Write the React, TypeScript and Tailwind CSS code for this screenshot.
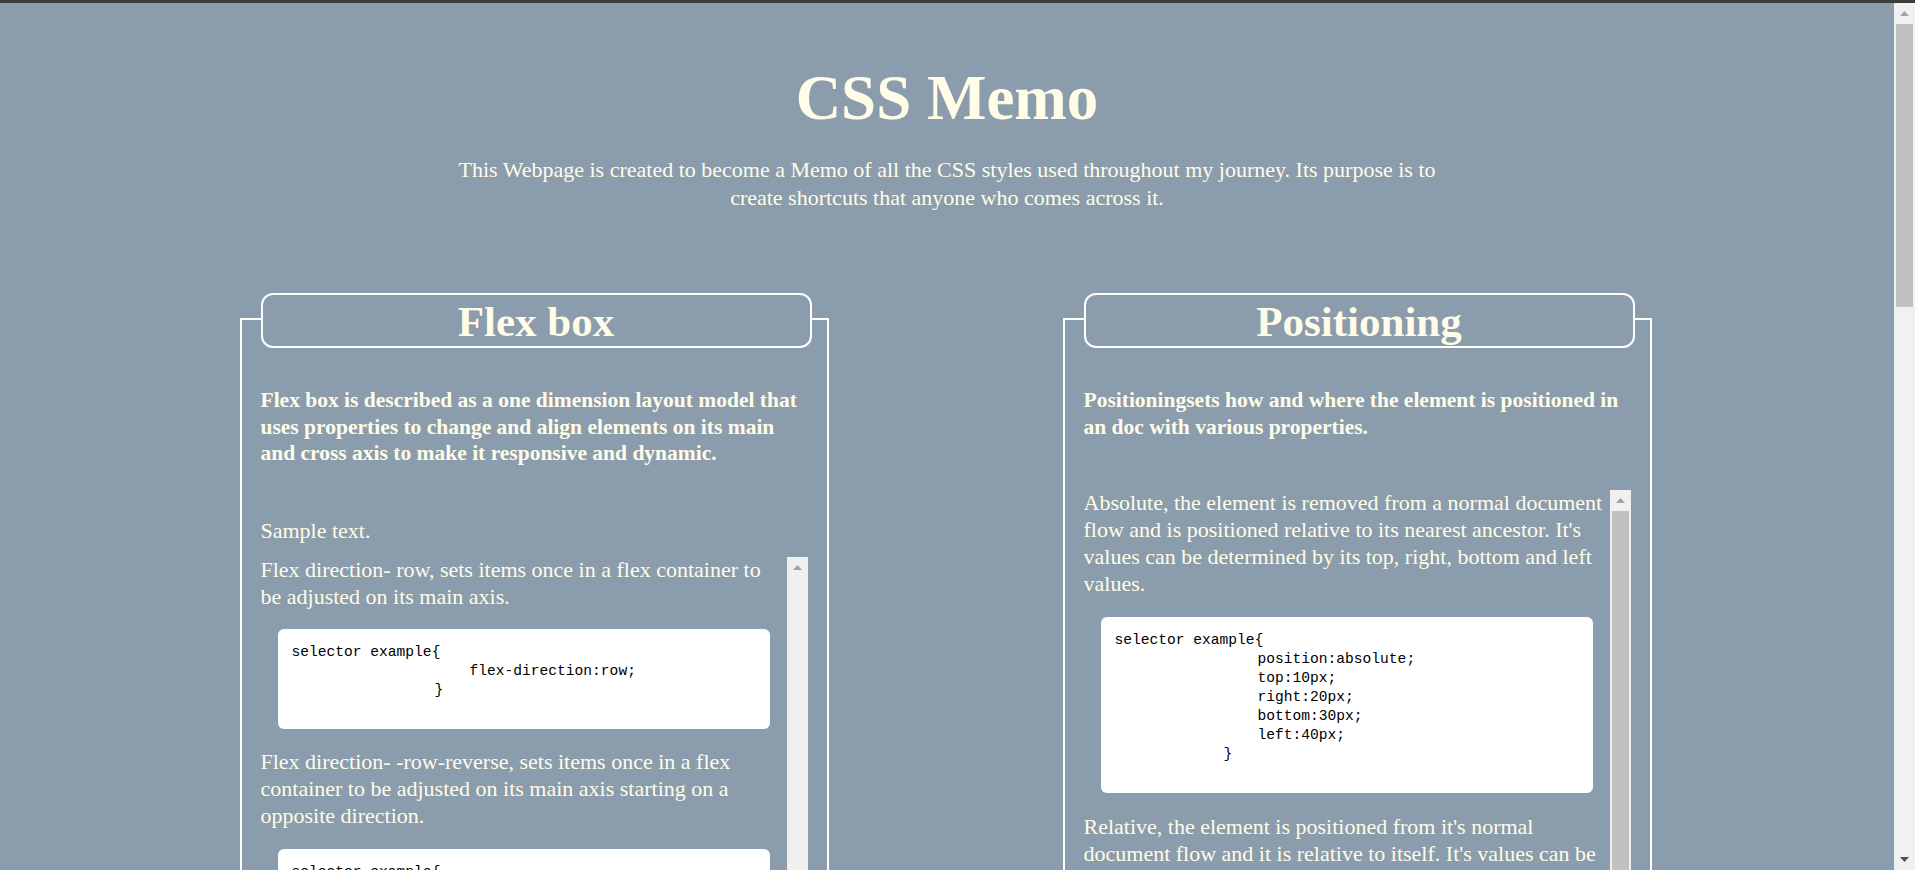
import type { ReactNode } from "react";

function Arrow({ down = false, color }: { down?: boolean; color: string }) {
  return (
    <div className="flex h-[21px] shrink-0 items-center justify-center">
      <svg width="9" height="5" viewBox="0 0 9 5">
        <polygon points={down ? "0,0 9,0 4.5,5" : "0,5 9,5 4.5,0"} fill={color} />
      </svg>
    </div>
  );
}

// classic 21px scrollbar, drawn since the headless page hides real ones
function ScrollBar({
  thumb,
  showDown = true,
  downColor = "#505050",
  track = "bg-[#f1f1f1]",
}: {
  thumb?: string;
  showDown?: boolean;
  downColor?: string;
  track?: string;
}) {
  return (
    <div className={"flex w-[21px] shrink-0 flex-col " + track}>
      <Arrow color="#a3a3a3" />
      {thumb && <div className={"mx-[2px] bg-[#c1c1c1] " + thumb} />}
      <div className="flex-1" />
      {showDown && <Arrow down color={downColor} />}
    </div>
  );
}

function Lines({ lines, className = "" }: { lines: string[]; className?: string }) {
  return (
    <p className={"whitespace-nowrap leading-[26.7px] " + className}>
      {lines.map((l, i) => (
        <span key={i}>
          {l}
          {i < lines.length - 1 && <br />}
        </span>
      ))}
    </p>
  );
}

function Code({
  body,
  inner,
  close,
  className = "",
}: {
  body: string[];
  inner: string;
  close: string;
  className?: string;
}) {
  return (
    <pre
      className={
        "mx-[17px] rounded-md bg-white px-[14px] pt-[14px] pb-[10px] font-['Liberation_Mono',monospace] text-[14.6px] leading-[19px] text-black " +
        className
      }
    >
      <div>selector example{"{"}</div>
      {body.map((b) => (
        <div key={b} className={inner}>
          {b}
        </div>
      ))}
      <div className={close}>{"}"}</div>
      <div className="h-[19px]" />
    </pre>
  );
}

function Card({ title, children }: { title: string; children: ReactNode }) {
  return (
    <section className="w-[589px] border-2 border-white pl-[19px] pr-[19px] pb-[20px]">
      <div className="-mt-[27px] flex h-[55px] w-[551px] justify-center rounded-[12px] border-2 border-white bg-[#8b9dac] pt-[3px]">
        <h2 className="text-[43px] leading-[48px] font-bold">{title}</h2>
      </div>
      {children}
    </section>
  );
}

export default function App() {
  return (
    <div className="flex h-screen flex-col bg-[#8b9dac]">
      <div className="h-[3px] shrink-0 bg-[#3c3c3c]" />
      <div className="flex min-h-0 flex-1">
        <div className="min-w-0 flex-1 overflow-hidden">
          <main className="font-['Liberation_Serif',serif] text-[22px] text-[#fffce8]">
            <header className="flex flex-col items-center">
              <h1 className="mt-[59px] text-[63px] leading-[72px] font-bold">CSS Memo</h1>
              <p className="mt-[22px] text-center text-[22px] leading-[28px]">
                This Webpage is created to become a Memo of all the CSS styles used throughout my journey. Its purpose is to
                <br />
                create shortcuts that anyone who comes across it.
              </p>
            </header>

            <div className="mt-[106px] flex justify-center gap-[234px] pr-[3px]">
              <Card title="Flex box">
                <Lines
                  className="mt-[39px] text-[21.5px] font-bold"
                  lines={[
                    "Flex box is described as a one dimension layout model that",
                    "uses properties to change and align elements on its main",
                    "and cross axis to make it responsive and dynamic.",
                  ]}
                />
                <Lines className="mt-[51px]" lines={["Sample text."]} />
                <div className="mt-[12px] flex h-[640px]">
                  <div className="w-[526px] overflow-hidden">
                    <Lines
                      lines={[
                        "Flex direction- row, sets items once in a flex container to",
                        "be adjusted on its main axis.",
                      ]}
                    />
                    <Code
                      className="mt-[19px]"
                      body={["flex-direction:row;"]}
                      inner="pl-[178px]"
                      close="pl-[143px]"
                    />
                    <Lines
                      className="mt-[20px]"
                      lines={[
                        "Flex direction- -row-reverse, sets items once in a flex",
                        "container to be adjusted on its main axis starting on a",
                        "opposite direction.",
                      ]}
                    />
                    <Code
                      className="mt-[20px]"
                      body={["flex-direction:row-reverse;"]}
                      inner="pl-[178px]"
                      close="pl-[143px]"
                    />
                    <Lines
                      className="mt-[20px]"
                      lines={[
                        "Flex direction- column, sets items once in a flex container",
                        "to be adjusted on its cross axis.",
                      ]}
                    />
                  </div>
                  <ScrollBar track="bg-[#f0f0f0]" downColor="#a3a3a3" />
                </div>
              </Card>

              <Card title="Positioning">
                <Lines
                  className="mt-[39px] text-[21.5px] font-bold"
                  lines={[
                    "Positioningsets how and where the element is positioned in",
                    "an doc with various properties.",
                  ]}
                />
                <div className="mt-[50px] flex h-[707px]">
                  <div className="w-[526px] overflow-hidden">
                    <Lines
                      lines={[
                        "Absolute, the element is removed from a normal document",
                        "flow and is positioned relative to its nearest ancestor. It's",
                        "values can be determined by its top, right, bottom and left",
                        "values.",
                      ]}
                    />
                    <Code
                      className="mt-[20px]"
                      body={["position:absolute;", "top:10px;", "right:20px;", "bottom:30px;", "left:40px;"]}
                      inner="pl-[143px]"
                      close="pl-[109px]"
                    />
                    <Lines
                      className="mt-[21px]"
                      lines={[
                        "Relative, the element is positioned from it's normal",
                        "document flow and it is relative to itself. It's values can be",
                        "determined by its top, right, bottom and left values.",
                      ]}
                    />
                    <Code
                      className="mt-[20px]"
                      body={["position:relative;", "top:10px;", "right:20px;", "bottom:30px;", "left:40px;"]}
                      inner="pl-[143px]"
                      close="pl-[109px]"
                    />
                  </div>
                  <ScrollBar track="bg-[#f0f0f0]" thumb="h-[470px]" downColor="#a3a3a3" />
                </div>
              </Card>
            </div>
          </main>
        </div>
        <ScrollBar thumb="h-[283px]" />
      </div>
    </div>
  );
}
